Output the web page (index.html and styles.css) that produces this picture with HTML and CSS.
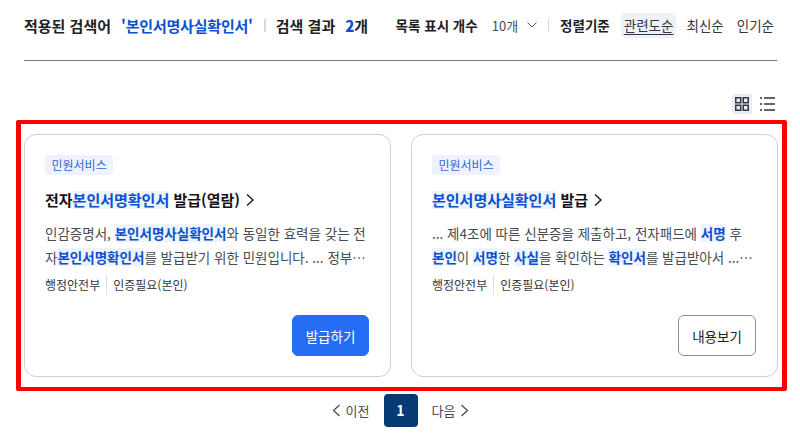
FILE: index.html
```html
<!DOCTYPE html>
<html lang="ko">
	<head>
		<title>검색 결과</title>
		<meta name="viewport" content="width=device-width, initial-scale=1" />
		<link rel="stylesheet" href="styles.css">
	</head>
	<body>
		<header class="toolbar">
			<div class="summary">
				<span>적용된 검색어</span>
				<span class="keyword">'본인서명사실확인서'</span>
				<i class="bar"></i>
				<span>검색 결과</span>
				<span class="count"><b>2</b>개</span>
			</div>
			<div class="options">
				<span class="opt-label">목록 표시 개수</span>
				<span class="select">10개
					<svg width="10" height="6" viewBox="0 0 10 6"><path d="M.5 .5 5 5 9.5 .5" fill="none" stroke="#555" stroke-width="1"/></svg>
				</span>
				<i class="bar thin"></i>
				<span class="opt-label">정렬기준</span>
				<span class="sort active"><u>관련도순</u></span>
				<span class="sort">최신순</span>
				<span class="sort">인기순</span>
			</div>
		</header>
		<div class="views">
			<span class="view active">
				<svg width="14" height="14" viewBox="0 0 14 14" fill="none" stroke="#33363d" stroke-width="1.5"><rect x=".75" y=".75" width="5" height="5"/><rect x="8.25" y=".75" width="5" height="5"/><rect x=".75" y="8.25" width="5" height="5"/><rect x="8.25" y="8.25" width="5" height="5"/></svg>
			</span>
			<span class="view">
				<svg width="15" height="14" viewBox="0 0 15 14" fill="none" stroke="#33363d" stroke-width="1.3"><path d="M4 1H15M4 7H15M4 13H15M0 1H2M0 7H2M0 13H2"/></svg>
			</span>
		</div>
		<section class="frame">
			<main class="results">
				<article class="card">
					<span class="tag">민원서비스</span>
					<h2><span>전자<mark>본인서명확인서</mark> 발급(열람)</span>
						<svg width="10" height="14" viewBox="0 0 10 14"><path d="M2 1.5 8 7 2 12.5" fill="none" stroke="#222" stroke-width="1.5"/></svg>
					</h2>
					<p>인감증명서, <mark>본인서명사실확인서</mark>와 동일한 효력을 갖는 전자<mark>본인서명확인서</mark>를 발급받기 위한 민원입니다. ... 정부…</p>
					<div class="meta"><span>행정안전부</span><span>인증필요(본인)</span></div>
					<div class="actions"><a class="btn primary">발급하기</a></div>
				</article>
				<article class="card">
					<span class="tag">민원서비스</span>
					<h2><span><mark>본인서명사실확인서</mark> 발급</span>
						<svg width="10" height="14" viewBox="0 0 10 14"><path d="M2 1.5 8 7 2 12.5" fill="none" stroke="#222" stroke-width="1.5"/></svg>
					</h2>
					<p>... 제4조에 따른 신분증을 제출하고, 전자패드에 <mark>서명</mark> 후 <mark>본인</mark>이 <mark>서명</mark>한 <mark>사실</mark>을 확인하는 <mark>확인서</mark>를 발급받아서 ...…</p>
					<div class="meta"><span>행정안전부</span><span>인증필요(본인)</span></div>
					<div class="actions"><a class="btn">내용보기</a></div>
				</article>
			</main>
		</section>
		<nav class="pager">
			<a class="step">
				<svg width="9" height="13" viewBox="0 0 9 13"><path d="M7.5 1 1.5 6.5 7.5 12" fill="none" stroke="#444" stroke-width="1.2"/></svg>
				이전
			</a>
			<b class="page">1</b>
			<a class="step">다음
				<svg width="9" height="13" viewBox="0 0 9 13"><path d="M1.5 1 7.5 6.5 1.5 12" fill="none" stroke="#444" stroke-width="1.2"/></svg>
			</a>
		</nav>
	</body>
</html>
```

FILE: styles.css
```css
* { box-sizing: border-box; }
html, body { height: 100%; }
body {
	margin: 0;
	padding: 0 23px 0 24px;
	overflow: hidden;
	color: #1e2124;
	background: #fff;
	font-family: "Noto Sans CJK KR", "Noto Sans", sans-serif;
	font-size: 13px;
}
i { display: block; }
mark {
	display: inline-block;
	background: #eef4fd;
	color: #0b50d0;
	font-weight: 700;
	line-height: 18px;
}

.toolbar {
	display: flex;
	align-items: center;
	justify-content: space-between;
	height: 61px;
	padding: 0 3px 10px 0;
	border-bottom: 1px solid #777;
}
.summary, .options { display: flex; align-items: center; }
.summary {
	font-size: 15px;
	font-weight: 700;
}
.keyword { margin: 0 11px 0 10px; color: #0b50d0; letter-spacing: -0.2px; }
.count { margin-left: 10px; }
.count b { color: #0b50d0; }
.bar {
	width: 2px;
	height: 13px;
	margin-right: 10px;
	background: #d6d9dd;
}
.options { font-size: 13.5px; }
.opt-label { font-weight: 700; }
.select {
	display: flex;
	align-items: center;
	gap: 9px;
	margin: 0 11px 0 14px;
	color: #464c53;
	font-size: 13px;
}
.bar.thin { width: 1px; height: 14px; margin-right: 11px; }
.sort { margin-left: 13px; color: #33363d; }
.sort.active {
	display: flex;
	align-items: center;
	height: 25px;
	margin-left: 11px;
	margin-right: -3px;
	padding: 0 3px;
	border-radius: 3px;
	background: #eef2f7;
}
.sort u { text-underline-offset: 3px; }

.views {
	display: flex;
	justify-content: flex-end;
	gap: 8px;
	height: 59px;
	padding: 33px 2px 0 0;
}
.view {
	display: flex;
	align-items: center;
	justify-content: center;
	height: 20px;
}
.view.active {
	width: 20px;
	border-radius: 3px;
	background: #e6ecf3;
}

.frame {
	height: 271px;
	margin: 0 -10px 0 -8px;
	padding: 10px 4px 10px 3px;
	border: solid #f00;
	border-width: 4px 5px;
	border-radius: 2px;
}
.results {
	display: flex;
	gap: 20px;
	height: 100%;
}
.card {
	flex: 1;
	display: flex;
	flex-direction: column;
	align-items: flex-start;
	padding: 20px 21px 20px 20px;
	border: 1px solid #cdd1d5;
	border-radius: 12px;
	background: #fff;
}
.tag {
	padding: 0 6.5px;
	height: 20px;
	line-height: 20px;
	border-radius: 4px;
	background: #eef2fd;
	color: #2f68d8;
	font-size: 12px;
}
.card h2 {
	display: flex;
	align-items: center;
	gap: 5px;
	margin: 13px 0 0;
	font-size: 15px;
	font-weight: 700;
	line-height: 24px;
	color: #131416;
}
.card p {
	margin: 9px 0 0;
	color: #464c53;
	font-size: 13.5px;
	line-height: 24px;
}
.meta {
	display: flex;
	margin-top: 6px;
	font-size: 12px;
	line-height: 20px;
	color: #33363d;
}
.meta span + span {
	margin-left: 6px;
	padding-left: 6px;
	border-left: 1px solid #dcdfe3;
}
.actions {
	align-self: stretch;
	display: flex;
	justify-content: flex-end;
	margin-top: auto;
}
.btn {
	display: flex;
	align-items: center;
	justify-content: center;
	width: 78px;
	height: 41px;
	border-radius: 6px;
	border: 1px solid #8a8f96;
	color: #1e2124;
	font-size: 13.5px;
}
.btn.primary {
	width: 77px;
	border-color: #256ef4;
	background: #256ef4;
	color: #fff;
}

.pager {
	display: flex;
	align-items: center;
	justify-content: center;
	gap: 14px;
	margin-top: 3px;
	color: #464c53;
	font-size: 13px;
}
.step { display: flex; align-items: center; gap: 5px; }
.page {
	width: 34px;
	height: 33px;
	line-height: 33px;
	text-align: center;
	border-radius: 4px;
	background: #063a74;
	color: #fff;
	font-size: 14px;
}
```
